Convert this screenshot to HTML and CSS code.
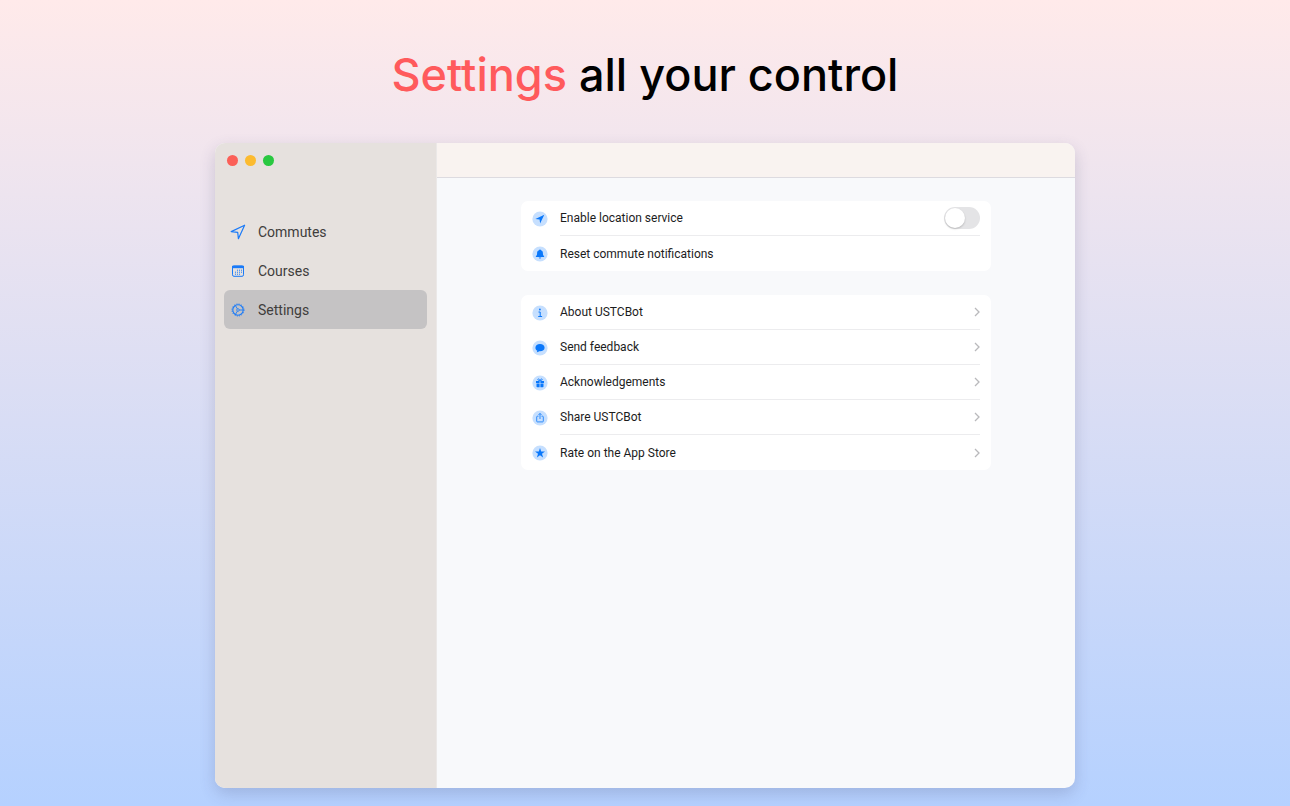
FILE: index.html
```html
<!DOCTYPE html>
<html lang="en">
<head>
  <meta charset="UTF-8" />
  <meta name="viewport" content="width=device-width, initial-scale=1.0"/>
  <title>USTCBot Settings</title>
  <link rel="stylesheet" href="styles.css">
</head>
<body>

  <h1><span class="accent">Settings</span> all your control</h1>

  <div class="window">
    <aside class="sidebar">
      <div class="lights">
        <span class="light red"></span>
        <span class="light yellow"></span>
        <span class="light green"></span>
      </div>

      <nav>
        <a class="nav-item" href="#commutes">
          <svg viewBox="0 0 16 16" fill="none" stroke="#1a7af8" stroke-width="1.2" stroke-linejoin="round"><path d="M14.6 1.2 1.2 7.6l6.5.7.7 6.4z"/></svg>
          Commutes
        </a>
        <a class="nav-item" href="#courses">
          <svg viewBox="0 0 16 16" fill="none" stroke="#1a7af8">
            <rect x="2.5" y="2.9" width="11" height="10.4" rx="1.5"/>
            <path d="M2 4h12" stroke-width="2.4"/>
            <path d="M7 7.2h5M5 9.200h7M5 11.200h5" stroke-width="1" stroke-dasharray="1 1"/>
          </svg>
          Courses
        </a>
        <a class="nav-item active" href="#settings">
          <svg viewBox="0 0 16 16" fill="none" stroke="#1a7af8">
            <circle cx="8" cy="8" r="5.2" stroke-width="1.1"/>
            <circle cx="8" cy="8" r="6" stroke-width="1" stroke-dasharray="1.1 1.25"/>
            <circle cx="8" cy="8" r="1.3" stroke-width=".8"/>
            <path d="M9.3 8h3.8M7.4 6.9 5.4 3.5M7.4 9.1l-2 3.4" stroke-width=".9"/>
          </svg>
          Settings
        </a>
      </nav>
    </aside>

    <main class="main">
      <div class="toolbar"></div>

      <div class="content">
        <div class="card">
          <div class="row">
            <svg class="icon" viewBox="0 0 16 16"><circle cx="8" cy="8" r="7.6"/><path d="M12.3 3.7 3.4 7.900l4.200.5.500 4.200z"/></svg>
            <div class="row-body">
              <label for="location">Enable location service</label>
              <input type="checkbox" role="switch" class="switch" id="location">
            </div>
          </div>
          <button class="row" type="button">
            <svg class="icon" viewBox="0 0 16 16"><circle cx="8" cy="8" r="7.6"/><path d="M8 3.5c.6 0 .9.3 1 .8 1.3.4 1.9 1.4 1.9 2.7 0 1.9.4 2.4 1.1 3.1.4.4.2.9-.3.9H4.3c-.5 0-.7-.5-.3-.9.7-.7 1.1-1.2 1.1-3.1 0-1.3.6-2.3 1.9-2.7.1-.5.4-.8 1-.8zM6.8 11.5h2.4c-.1.7-.6 1.1-1.2 1.1s-1.1-.4-1.2-1.1z"/></svg>
            <span class="row-body">Reset commute notifications</span>
          </button>
        </div>

        <div class="card">
          <a class="row" href="#about">
            <svg class="icon" viewBox="0 0 16 16"><circle cx="8" cy="8" r="7.6"/><circle class="dot" cx="7.9" cy="4.5" r=".9"/><path class="line" d="M6.5 7h1.7v4.4M6.2 11.5h3.9"/></svg>
            <span class="row-body">About USTCBot
              <svg class="chevron" viewBox="0 0 6 10"><path d="m1 1 4 4-4 4"/></svg>
            </span>
          </a>
          <a class="row" href="#feedback">
            <svg class="icon" viewBox="0 0 16 16"><circle cx="8" cy="8" r="7.6"/><path d="M8 4.1c2.7 0 4.6 1.5 4.6 3.6S10.7 11.3 8 11.3c-.3 0-.6 0-.9-.1-.6.6-1.500 1-2.400 1 .4-.4.6-.9.6-1.500C4.1 10 3.400 9 3.400 7.700c0-2.100 1.900-3.600 4.600-3.600z"/></svg>
            <span class="row-body">Send feedback
              <svg class="chevron" viewBox="0 0 6 10"><path d="m1 1 4 4-4 4"/></svg>
            </span>
          </a>
          <a class="row" href="#acknowledgements">
            <svg class="icon" viewBox="0 0 16 16"><circle cx="8" cy="8" r="7.6"/><path d="M4 5.9h3.6v2H4zM8.4 5.9H12v2H8.4zM4.5 8.5h3.1v3.7H5.3c-.5 0-.8-.3-.8-.8zM8.4 8.5h3.1v2.9c0 .5-.3.8-.8.8H8.4z"/><path class="line thin" d="M8 5.7C7.6 4.2 6.8 3.7 6.1 4s-.5 1.6 1.9 1.7C10.4 5.6 10.6 4.3 9.9 4S8.4 4.2 8 5.7z"/></svg>
            <span class="row-body">Acknowledgements
              <svg class="chevron" viewBox="0 0 6 10"><path d="m1 1 4 4-4 4"/></svg>
            </span>
          </a>
          <a class="row" href="#share">
            <svg class="icon" viewBox="0 0 16 16"><circle cx="8" cy="8" r="7.6"/><path class="line thin" d="M6.5 6.2H5.4c-.4 0-.7.3-.7.7v4.3c0 .4.3.7.7.7h5.2c.4 0 .7-.3.7-.7V6.9c0-.4-.3-.7-.7-.7H9.5M8 9V3.5M6.5 4.9 8 3.4l1.500 1.500"/></svg>
            <span class="row-body">Share USTCBot
              <svg class="chevron" viewBox="0 0 6 10"><path d="m1 1 4 4-4 4"/></svg>
            </span>
          </a>
          <a class="row" href="#rate">
            <svg class="icon" viewBox="0 0 16 16"><circle cx="8" cy="8" r="7.6"/><path d="m8 3 1.2 3.4 3.8.1-3 2.3 1.1 3.6L8 10.3l-3.1 2.1L6 8.8 3 6.5l3.800-.1z"/></svg>
            <span class="row-body">Rate on the App Store
              <svg class="chevron" viewBox="0 0 6 10"><path d="m1 1 4 4-4 4"/></svg>
            </span>
          </a>
        </div>
      </div>
    </main>
  </div>

</body>
</html>
```
FILE: styles.css
```css
* {
  box-sizing: border-box;
}

body {
  font-family: Roboto, "Liberation Sans", sans-serif;
  background: linear-gradient(#ffeaea, #b5d1ff);
  margin: 0;
  padding: 45px 20px 18px;
  display: flex;
  flex-direction: column;
  align-items: center;
  gap: 38px;
  min-height: 100vh;
}

h1 {
  margin: 0;
  font-family: Inter, "Liberation Sans", sans-serif;
  font-size: 45px;
  line-height: 60px;
  font-weight: 500;
  color: #000;
}

.accent {
  color: #ff5a5c;
}

.window {
  flex: 1;
  display: flex;
  width: 100%;
  max-width: 860px;
  border-radius: 10px;
  overflow: hidden;
  background: #f8f9fb;
  box-shadow: 0 6px 16px rgba(60, 60, 100, 0.2);
}

.sidebar {
  width: 222px;
  padding: 12px 9px;
  background: #e6e1de;
  border-right: 1px solid #ebe8e7;
}

.lights {
  display: flex;
  gap: 7px;
  padding-left: 3px;
  margin-bottom: 46px;
}

.light {
  width: 11px;
  height: 11px;
  border-radius: 50%;
}

.red {
  background: #fb6058;
}

.yellow {
  background: #fcbb2f;
}

.green {
  background: #29c840;
}

.nav-item {
  display: flex;
  align-items: center;
  gap: 12px;
  height: 39px;
  padding: 0 6px;
  border-radius: 6px;
  font-size: 14px;
  color: #403d3c;
  text-decoration: none;
}

.nav-item svg {
  width: 16px;
  height: 16px;
}

.active {
  background: #c5c3c4;
}

.main {
  flex: 1;
  min-width: 0;
}

.toolbar {
  height: 35px;
  background: #f9f3f0;
  border-bottom: 1px solid #dddbe0;
}

.content {
  display: flex;
  flex-direction: column;
  gap: 24px;
  max-width: 510px;
  margin: 0 auto;
  padding: 23px 20px;
}

.card {
  background: #fff;
  border-radius: 7px;
}

.row {
  display: flex;
  align-items: center;
  gap: 12px;
  width: 100%;
  height: 35px;
  padding: 0 11px;
  border: 0;
  background: none;
  font-family: inherit;
  font-size: 12px;
  color: #1c1c1d;
  text-align: left;
  text-decoration: none;
}

.row-body {
  flex: 1;
  display: flex;
  align-items: center;
  justify-content: space-between;
  height: 100%;
  border-bottom: 1px solid #ececee;
}

.row:last-child .row-body {
  border-bottom: 0;
}

.icon {
  width: 16px;
  height: 16px;
  fill: #0a78fb;
}

.icon circle {
  fill: #c6dffe;
}

.icon .dot {
  fill: #0a78fb;
}

.icon .line {
  fill: none;
  stroke: #0a78fb;
  stroke-width: 1;
}

.icon .thin {
  stroke-width: 0.8;
}

.chevron {
  width: 6px;
  height: 10px;
  fill: none;
  stroke: #b9b9bc;
  stroke-width: 1.3;
}

.switch {
  appearance: none;
  display: flex;
  width: 36px;
  height: 22px;
  margin: 0;
  padding: 1px;
  border-radius: 11px;
  background: #e4e4e6;
}

.switch::before {
  content: "";
  width: 20px;
  height: 20px;
  border-radius: 50%;
  background: #fff;
  box-shadow: 0 1px 2px rgba(0, 0, 0, 0.2);
}

.switch:checked {
  justify-content: flex-end;
  background: #34c759;
}
```
